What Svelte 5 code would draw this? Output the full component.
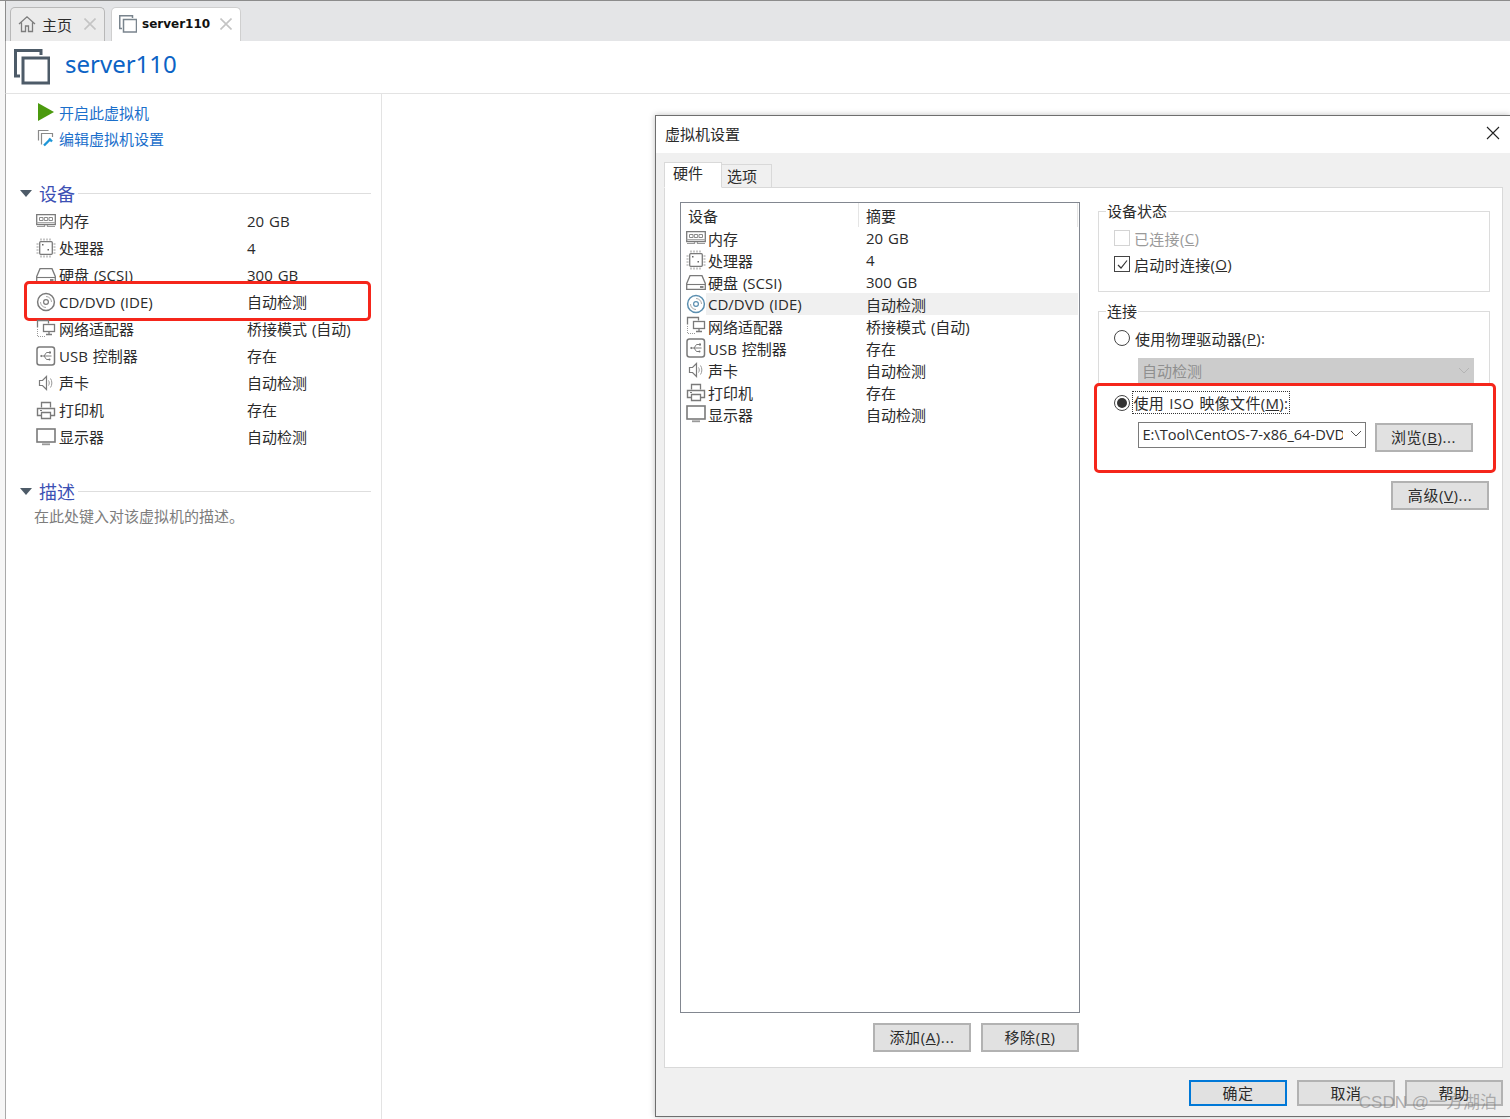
<script>
	const devices = [
		{ icon: 'memory', name: '内存', value: '20 GB' },
		{ icon: 'cpu', name: '处理器', value: '4' },
		{ icon: 'disk', name: '硬盘 (SCSI)', value: '300 GB' },
		{ icon: 'cd', name: 'CD/DVD (IDE)', value: '自动检测' },
		{ icon: 'net', name: '网络适配器', value: '桥接模式 (自动)' },
		{ icon: 'usb', name: 'USB 控制器', value: '存在' },
		{ icon: 'sound', name: '声卡', value: '自动检测' },
		{ icon: 'printer', name: '打印机', value: '存在' },
		{ icon: 'monitor', name: '显示器', value: '自动检测' }
	];
</script>

{#snippet vmIcon(size)}
	<svg width={size} height={size} viewBox="0 0 36 36" fill="none" stroke="#4d5b68" stroke-width="3">
		<path d="M27 6V1.5H1.5V27H6" />
		<rect x="9" y="9" width="26" height="25" />
	</svg>
{/snippet}

{#snippet closeIcon()}
	<svg class="tab-close" width="12" height="12" viewBox="0 0 12 12" stroke="#c4c4c4" stroke-width="1.6">
		<path d="M0.5 0.5L11.5 11.5M11.5 0.5L0.5 11.5" />
	</svg>
{/snippet}

{#snippet deviceIcon(name, active)}
	<svg class="dev-icon" width="20" height="20" viewBox="0 0 20 20" fill="none" stroke={active ? '#5b8fb0' : '#7a7a7a'} stroke-width="1.3">
		{#if name === 'memory'}
			<path d="M0.7 3.7H19.3V13.5H0.7Z" />
			<path d="M3.5 6.5H7V9.5H3.5ZM8.3 6.5H11.7V9.5H8.3ZM13 6.5H16.5V9.5H13Z" stroke="#8a8a8a" stroke-width="1" />
			<path d="M0.7 11.5H19.3" stroke="#aaa" stroke-width="1" />
			<path d="M1 15.5H8.5V14M11.5 14V15.5H19" stroke="#9a9a9a" stroke-width="1.2" />
		{:else if name === 'cpu'}
			<rect x="3.7" y="3.7" width="12.6" height="12.6" rx="1" />
			<path d="M5 0.5V2.5M8 0.5V2.5M11 0.5V2.5M14 0.5V2.5M5 17.5V19.5M8 17.5V19.5M11 17.5V19.5M14 17.5V19.5M0.5 6H2.5M0.5 9H2.5M0.5 12H2.5M0.5 15H2.5M17.5 6H19.5M17.5 9H19.5M17.5 12H19.5M17.5 15H19.5" stroke="#999" stroke-width="1.1" />
			<path d="M6 6H7.5V7.5H6ZM11.5 11H13V12.5H11.5Z" fill="#666" stroke="none" />
		{:else if name === 'disk'}
			<path d="M0.7 11.5L4 3.7H16L19.3 11.5V17.3H0.7Z" />
			<path d="M0.7 12.5H19.3" stroke-width="1.1" />
			<path d="M14 15H17.5" stroke="#666" stroke-width="1.6" />
		{:else if name === 'cd'}
			<circle cx="10" cy="10" r="8.4" stroke-width="1.5" />
			<circle cx="10" cy="10" r="2.4" stroke-width="1.2" />
			<path d="M10 4.5A5.5 5.5 0 0 1 15.5 10M10 15.5A5.5 5.5 0 0 1 4.5 10" stroke="#aaa" stroke-width="1" />
		{:else if name === 'net'}
			<path d="M1.5 8.5V1.5H12.5V4.5" />
			<path d="M1.5 10V17.5H9" stroke-dasharray="1 1" stroke="#999" stroke-width="1" />
			<rect x="7.5" y="5.5" width="11" height="7" />
			<path d="M13 13V15.5M10 15.5H16" />
		{:else if name === 'usb'}
			<rect x="1" y="1" width="17.5" height="18" rx="2.5" stroke-width="1.5" />
			<path d="M4.5 10H15.5M8 10L10.5 6.5H13M8 10L10.5 13.5H13" stroke-width="1" />
			<path d="M4 10L6 8.8V11.2Z" fill="#777" stroke="none" />
			<rect x="13" y="5.5" width="2" height="2" fill="#777" stroke="none" />
			<circle cx="13.5" cy="13.5" r="1" fill="#777" stroke="none" />
		{:else if name === 'sound'}
			<path d="M3.5 7.5H6.5L10.5 3.5V16.5L6.5 12.5H3.5Z" stroke-width="1.2" />
			<path d="M12.5 7.5C13.5 9 13.5 11 12.5 12.5M14.5 5.5C16.3 8 16.3 12 14.5 14.5" stroke="#999" stroke-width="1" />
		{:else if name === 'printer'}
			<path d="M5.5 7.5V2.5H14.5V7.5" />
			<path d="M5 15.5H1.5V8.5H18.5V15.5H15" stroke-width="1.4" />
			<path d="M5.5 12.5H14.5V18.5H5.5Z" />
			<path d="M4 10.5H6" stroke-width="1" />
		{:else}
			<rect x="1" y="2" width="18" height="13" stroke-width="1.6" />
			<path d="M6 17.3H14" stroke="#999" stroke-width="1.8" />
		{/if}
	</svg>
{/snippet}

{#snippet sectionHead(title)}
	<div class="section-head">
		<span class="caret"></span>
		<span class="section-title">{title}</span>
		<span class="section-line"></span>
	</div>
{/snippet}

<div class="window">
	<div class="tabbar">
		<div class="tab home-tab">
			<svg width="18" height="18" viewBox="0 0 18 18" fill="none" stroke="#7c7c7c" stroke-width="1.3">
				<path d="M1 9L9 1.8L17 9M3.5 7.5V16.5H7.5V11H10.5V16.5H14.5V7.5" />
			</svg>
			<span class="tab-label">主页</span>
			{@render closeIcon()}
		</div>
		<div class="tab vm-tab">
			<span class="tab-vm-icon">{@render vmIcon(18)}</span>
			<span class="tab-label bold">server110</span>
			{@render closeIcon()}
		</div>
	</div>

	<header class="vm-header">
		{@render vmIcon(36)}
		<h1>server110</h1>
	</header>

	<div class="content">
		<aside class="sidebar">
			<div class="actions">
				<div class="action">
					<svg width="18" height="18" viewBox="0 0 18 18"><path d="M1 0L17 9L1 18Z" fill="#4b9a0e" /></svg>
					<span>开启此虚拟机</span>
				</div>
				<div class="action">
					<svg width="18" height="18" viewBox="0 0 18 18" fill="none" stroke="#8a8a8a" stroke-width="1.2">
						<path d="M11.5 1.5H1.5V11.5" />
						<path d="M4.5 15.5V4.5H15.5V8" />
						<path d="M7 16.5L12.5 11M12 9.5L15 12.5" stroke="#1e96d8" stroke-width="2.4" />
					</svg>
					<span>编辑虚拟机设置</span>
				</div>
			</div>

			{@render sectionHead('设备')}
			<div class="side-list">
				{#each devices as d}
					<div class="side-row" class:marked={d.icon === 'cd'}>
						{@render deviceIcon(d.icon, false)}
						<span class="side-name">{d.name}</span>
						<span>{d.value}</span>
					</div>
				{/each}
			</div>

			{@render sectionHead('描述')}
			<p class="description">在此处键入对该虚拟机的描述。</p>
		</aside>
	</div>

	<section class="dialog">
		<div class="dialog-title">
			<span>虚拟机设置</span>
			<svg width="14" height="14" viewBox="0 0 14 14" stroke="#222" stroke-width="1.1">
				<path d="M1 1L13 13M13 1L1 13" />
			</svg>
		</div>
		<div class="dialog-body">
			<div class="tabs">
				<div class="dtab active">硬件</div>
				<div class="dtab">选项</div>
			</div>
			<div class="panel">
				<div class="left-col">
					<div class="list">
						<div class="list-head">
							<span class="col-a">设备</span>
							<span class="col-b">摘要</span>
						</div>
						{#each devices as d}
							<div class="list-row" class:selected={d.icon === 'cd'}>
								{@render deviceIcon(d.icon, d.icon === 'cd')}
								<span class="list-name">{d.name}</span>
								<span class="list-value">{d.value}</span>
							</div>
						{/each}
					</div>
					<div class="list-buttons">
						<button>添加(<u>A</u>)...</button>
						<button>移除(<u>R</u>)</button>
					</div>
				</div>

				<div class="right-col">
					<fieldset class="status">
						<legend>设备状态</legend>
						<label class="check disabled"><span class="box"></span>已连接(<u>C</u>)</label>
						<label class="check">
							<span class="box on">
								<svg width="13" height="13" viewBox="0 0 13 13" fill="none" stroke="#333" stroke-width="1.2"><path d="M2 7L5 10L11 2.5" /></svg>
							</span>
							启动时连接(<u>O</u>)
						</label>
					</fieldset>

					<fieldset class="connection">
						<legend>连接</legend>
						<label class="radio"><span class="dot"></span>使用物理驱动器(<u>P</u>):</label>
						<div class="select disabled-select">
							<span>自动检测</span>
							<svg width="12" height="7" viewBox="0 0 12 7" fill="none" stroke="#b4b4b4"><path d="M1 1L6 6L11 1" /></svg>
						</div>
					</fieldset>

					<div class="iso">
						<label class="radio">
							<span class="dot on"></span>
							<span class="focused">使用 ISO 映像文件(<u>M</u>):</span>
						</label>
						<div class="iso-row">
							<div class="select iso-select">
								<span class="iso-path">E:\Tool\CentOS-7-x86_64-DVD-2009.iso</span>
								<svg width="12" height="7" viewBox="0 0 12 7" fill="none" stroke="#555"><path d="M1 1L6 6L11 1" /></svg>
							</div>
							<button>浏览(<u>B</u>)...</button>
						</div>
					</div>

					<div class="advanced">
						<button>高级(<u>V</u>)...</button>
					</div>
				</div>
			</div>
			<div class="dialog-footer">
				<button class="primary">确定</button>
				<button>取消</button>
				<button>帮助</button>
			</div>
		</div>
	</section>

	<div class="watermark">CSDN @一方湖泊</div>
</div>

<style>
	:global(body) {
		margin: 0;
		background: #fff;
	}

	.window {
		position: relative;
		width: 1510px;
		height: 1119px;
		overflow: hidden;
		display: flex;
		flex-direction: column;
		box-sizing: border-box;
		padding-left: 5px;
		border-top: 1px solid #8c8c8c;
		background: #f6f6f6;
		font-family: 'Open Sans', 'Noto Sans CJK SC', sans-serif;
		font-size: 15px;
		word-spacing: 1px;
		color: #2b2b2b;
	}

	.tabbar {
		height: 40px;
		flex: none;
		background: #e4e5e7;
		display: flex;
		align-items: flex-end;
		gap: 6px;
		box-sizing: border-box;
		padding-left: 4px;
		border-left: 1px solid #8c8c8c;
	}

	.tab {
		height: 34px;
		box-sizing: border-box;
		border: 1px solid #b8b8b8;
		border-bottom: none;
		border-radius: 5px 5px 0 0;
		display: flex;
		align-items: center;
		padding: 0 8px 1px 7px;
		background: #ebebeb;
	}

	.home-tab {
		width: 95px;
	}

	.vm-tab {
		width: 130px;
		background: #fff;
		border-color: #cfcfcf;
	}

	.tab-vm-icon {
		display: flex;
		margin-right: 5px;
		opacity: 0.75;
	}

	.tab-label {
		margin-left: 6px;
		flex: 1;
	}

	.tab-label.bold {
		margin-left: 0;
		font-family: 'DejaVu Sans', sans-serif;
		font-weight: 700;
		font-size: 12px;
		color: #111;
	}

	.vm-header {
		height: 53px;
		flex: none;
		box-sizing: border-box;
		background: #fff;
		border-left: 1px solid #a9a9a9;
		border-bottom: 1px solid #e3e3e3;
		display: flex;
		align-items: center;
		gap: 15px;
		padding-left: 8px;
		padding-bottom: 1px;
	}

	.vm-header h1 {
		margin: 0 0 5px;
		font-weight: 400;
		font-size: 24px;
		color: #0b63c5;
		line-height: 1;
		font-family: 'Noto Sans', sans-serif;
	}

	.content {
		flex: 1;
		display: flex;
		background: #fff;
		border-left: 1px solid #a9a9a9;
	}

	.sidebar {
		width: 376px;
		box-sizing: border-box;
		border-right: 1px solid #e3e3e3;
		padding: 5px 10px 0 14px;
	}

	.actions {
		padding-left: 17px;
		height: 80px;
	}

	.action {
		height: 26px;
		display: flex;
		align-items: center;
		gap: 4px;
		color: #1b6fcb;
	}

	.section-head {
		display: flex;
		align-items: center;
		height: 28px;
	}

	.caret {
		width: 0;
		height: 0;
		border-left: 6px solid transparent;
		border-right: 6px solid transparent;
		border-top: 7px solid #4d5b68;
		margin-right: 7px;
	}

	.section-title {
		font-size: 18px;
		color: #3c50b4;
		margin-right: 3px;
	}

	.section-line {
		flex: 1;
		border-top: 1px solid #dedede;
	}

	.side-list {
		height: 270px;
	}

	.side-row {
		position: relative;
		display: flex;
		align-items: center;
		height: 27px;
		padding-left: 16px;
	}

	.side-row .dev-icon {
		flex: none;
		margin-right: 3px;
	}

	.side-name {
		width: 188px;
	}

	.marked::after {
		content: '';
		position: absolute;
		left: 4px;
		right: 0;
		top: -7px;
		bottom: -6px;
		border: 3.5px solid #f5261b;
		border-radius: 5px;
	}

	.description {
		margin: 0;
		padding-left: 14px;
		line-height: 22px;
		color: #7d7d7d;
	}

	.dialog {
		position: absolute;
		left: 655px;
		top: 114px;
		width: 855px;
		height: 1002px;
		box-sizing: border-box;
		border: 1px solid #6e6e6e;
		border-right: none;
		background: #f0f0f0;
		display: flex;
		flex-direction: column;
		box-shadow: 0 0 6px rgba(0, 0, 0, 0.25);
	}

	.dialog-title {
		height: 37px;
		flex: none;
		box-sizing: border-box;
		background: #fff;
		display: flex;
		align-items: center;
		justify-content: space-between;
		padding: 0 10px 3px 9px;
	}

	.dialog-body {
		flex: 1;
		display: flex;
		flex-direction: column;
		padding: 0 7px 0 8px;
		min-height: 0;
	}

	.tabs {
		height: 35px;
		flex: none;
		display: flex;
		align-items: flex-end;
		margin-bottom: -1px;
		position: relative;
		z-index: 1;
	}

	.dtab {
		height: 24px;
		width: 50px;
		box-sizing: border-box;
		border: 1px solid #d9d9d9;
		border-left: none;
		padding-left: 5px;
		line-height: 22px;
	}

	.dtab.active {
		height: 26px;
		width: 58px;
		background: #fff;
		border-left: 1px solid #d9d9d9;
		border-bottom: 1px solid #fff;
		padding-left: 8px;
		line-height: 20px;
	}

	.panel {
		flex: 1;
		min-height: 0;
		background: #fff;
		border: 1px solid #d9d9d9;
		box-sizing: border-box;
		display: flex;
		gap: 18px;
		padding: 14px 12px 0 15px;
	}

	.left-col {
		width: 400px;
		flex: none;
	}

	.list {
		height: 811px;
		box-sizing: border-box;
		border: 1px solid #828790;
		padding-left: 5px;
	}

	.list-head {
		height: 24px;
		display: flex;
		align-items: flex-start;
	}

	.col-a {
		width: 173px;
		padding-left: 2px;
		box-sizing: border-box;
		border-right: 1px solid #e5e5e5;
		height: 100%;
		line-height: 26px;
	}

	.col-b {
		padding-left: 7px;
		flex: 1;
		border-right: 1px solid #e5e5e5;
		margin-right: 1px;
		height: 100%;
		line-height: 26px;
	}

	.list-row {
		height: 22px;
		display: flex;
		align-items: center;
	}

	.list-row .dev-icon {
		flex: none;
		margin-right: 2px;
	}

	.list-name {
		width: 158px;
	}

	.list-value {
		flex: 1;
	}

	.list-row.selected {
		background: linear-gradient(to right, #fff 20px, #f0f0f0 20px);
		margin-right: 1px;
	}

	.list-buttons {
		display: flex;
		justify-content: flex-end;
		gap: 10px;
		margin-top: 10px;
		padding-right: 1px;
	}

	button {
		width: 98px;
		height: 29px;
		box-sizing: border-box;
		background: #e1e1e1;
		border: 2px solid #b2b2b2;
		padding: 0 0 2px;
		font: inherit;
		letter-spacing: 0.6px;
		color: inherit;
	}

	.right-col {
		width: 392px;
		flex: none;
	}

	fieldset {
		margin: 0;
		padding: 0;
		border: 1px solid #dcdcdc;
		box-sizing: border-box;
		position: relative;
	}

	legend {
		margin-left: -8px;
		padding: 0 1px;
		line-height: 18px;
	}

	.status {
		height: 90px;
		padding: 5px 15px 0;
		margin-bottom: 10px;
	}

	.check,
	.radio {
		display: flex;
		align-items: center;
		height: 26px;
		letter-spacing: 0.3px;
	}

	.disabled {
		color: #9a9a9a;
	}

	.box {
		width: 16px;
		height: 16px;
		box-sizing: border-box;
		border: 1px solid #d4d4d4;
		margin-right: 4px;
		display: flex;
		align-items: center;
		justify-content: center;
	}

	.box.on {
		border-color: #444;
	}

	.connection {
		height: 81px;
		border-bottom: none;
		padding: 5px 15px 0;
	}

	.dot {
		width: 16px;
		height: 16px;
		box-sizing: border-box;
		border: 1px solid #444;
		border-radius: 50%;
		margin-right: 5px;
		flex: none;
		display: flex;
		align-items: center;
		justify-content: center;
	}

	.dot.on {
		margin-right: 3px;
	}

	.dot.on::after {
		content: '';
		width: 10px;
		height: 10px;
		border-radius: 50%;
		background: #333;
	}

	.select {
		display: flex;
		align-items: center;
		justify-content: space-between;
		box-sizing: border-box;
		overflow: hidden;
	}

	.disabled-select {
		width: 336px;
		height: 27px;
		margin: 7px 0 0 24px;
		background: #cccccc;
		color: #8f8f8f;
		padding: 0 4px 2px;
	}

	.iso {
		position: relative;
		margin: 0 -6px 0 -4px;
		height: 90px;
		box-sizing: border-box;
		border: 3.5px solid #f5261b;
		border-radius: 5px;
		background: #fff;
		padding: 3.5px 0 0 16.5px;
	}

	.focused {
		outline: 1px dotted #333;
		outline-offset: 0;
		padding: 0 1px;
	}

	.iso-row {
		display: flex;
		gap: 9px;
		margin: 6px 0 0 24px;
		align-items: flex-start;
	}

	.iso-select {
		width: 228px;
		height: 26px;
		border: 1px solid #7a7a7a;
		padding: 0 3px 2px 4px;
		flex: none;
	}

	.iso-path {
		width: 200px;
		overflow: hidden;
		white-space: nowrap;
		word-spacing: 0;
		font-size: 14.6px;
	}

	.iso-row button {
		height: 29px;
		margin-top: 1px;
	}

	.advanced {
		display: flex;
		justify-content: flex-end;
		margin-top: 8px;
		padding-right: 1px;
	}

	.dialog-footer {
		height: 48px;
		flex: none;
		display: flex;
		justify-content: flex-end;
		align-items: center;
		gap: 10px;
		padding-top: 2px;
		box-sizing: border-box;
	}

	.dialog-footer button {
		height: 26px;
	}

	.dialog-footer .primary {
		border-color: #0078d7;
	}

	.watermark {
		position: absolute;
		right: 13px;
		bottom: 6px;
		font-family: 'Liberation Sans', 'Noto Sans CJK SC', sans-serif;
		font-size: 17px;
		word-spacing: 0;
		color: rgba(120, 120, 120, 0.55);
	}
</style>
